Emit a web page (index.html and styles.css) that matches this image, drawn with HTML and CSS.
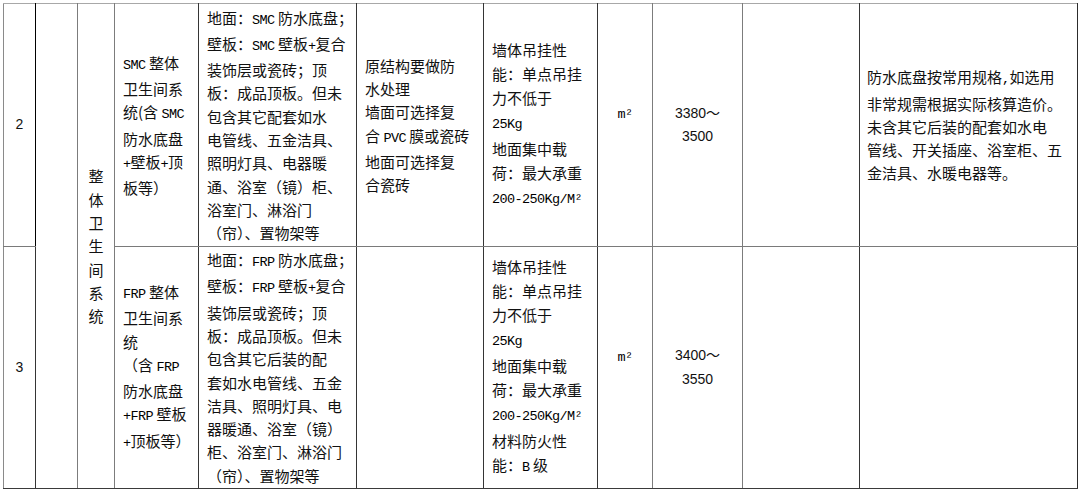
FILE: index.html
```html
<!DOCTYPE html>
<html lang="zh-CN">
<head>
<meta charset="utf-8">
<title>整体卫生间系统</title>
<link rel="stylesheet" href="styles.css">
</head>
<body>
<div class="page">
<table class="sheet">
  <colgroup>
    <col class="c1"><col class="c2"><col class="c3"><col class="c4"><col class="c5"><col class="c6"><col class="c7"><col class="c8"><col class="c9"><col class="c10"><col class="c11">
  </colgroup>
  <tr class="r1">
    <td class="num">2</td>
    <td class="blank g-right" rowspan="2"></td>
    <td class="cat g-right" rowspan="2"><div class="vert">整体卫生间系统</div></td>
    <td class="txt"><span class="lat">SMC</span> 整体<br>卫生间系<br>统(含 <span class="lat">SMC</span><br>防水底盘<br><span class="lat">+</span>壁板<span class="lat">+</span>顶<br>板等）</td>
    <td class="txt">地面：<span class="lat">SMC</span> 防水底盘；<br>壁板：<span class="lat">SMC</span> 壁板<span class="lat">+</span>复合<br>装饰层或瓷砖；顶<br>板：成品顶板。但未<br>包含其它配套如水<br>电管线、五金洁具、<br>照明灯具、电器暖<br>通、浴室（镜）柜、<br>浴室门、淋浴门<br>（帘）、置物架等</td>
    <td class="txt">原结构要做防<br>水处理<br>墙面可选择复<br>合 <span class="lat">PVC</span> 膜或瓷砖<br>地面可选择复<br>合瓷砖</td>
    <td class="txt perf">墙体吊挂性<br>能：单点吊挂<br>力不低于<br><span class="lat">25Kg</span><br>地面集中载<br>荷：最大承重<br><span class="lat">200-250Kg/M²</span></td>
    <td class="unit g-right"><span class="lat">m²</span><br>&nbsp;</td>
    <td class="price g-right">3380～<br>3500</td>
    <td class="txt"></td>
    <td class="txt note">防水底盘按常用规格<span class="lat">,</span>如选用<br>非常规需根据实际核算造价。<br>未含其它后装的配套如水电<br>管线、开关插座、浴室柜、五<br>金洁具、水暖电器等。</td>
  </tr>
  <tr class="r2">
    <td class="num">3</td>
    <td class="txt"><span class="lat">FRP</span> 整体<br>卫生间系<br>统<br>（含 <span class="lat">FRP</span><br>防水底盘<br><span class="lat">+FRP</span> 壁板<br><span class="lat">+</span>顶板等）</td>
    <td class="txt">地面：<span class="lat">FRP</span> 防水底盘；<br>壁板：<span class="lat">FRP</span> 壁板<span class="lat">+</span>复合<br>装饰层或瓷砖；顶<br>板：成品顶板。但未<br>包含其它后装的配<br>套如水电管线、五金<br>洁具、照明灯具、电<br>器暖通、浴室（镜）<br>柜、浴室门、淋浴门<br>（帘）、置物架等</td>
    <td class="txt"></td>
    <td class="txt perf">墙体吊挂性<br>能：单点吊挂<br>力不低于<br><span class="lat">25Kg</span><br>地面集中载<br>荷：最大承重<br><span class="lat">200-250Kg/M²</span><br>材料防火性<br>能：<span class="lat">B</span> 级</td>
    <td class="unit g-right"><span class="lat">m²</span><br>&nbsp;</td>
    <td class="price g-right">3400～<br>3550</td>
    <td class="txt"></td>
    <td class="txt note"></td>
  </tr>
</table>
</div>
</body>
</html>
```

FILE: styles.css
```css
html, body {
  margin: 0;
  padding: 0;
  background: #ffffff;
}

.page {
  padding: 3px 0 0 3px;
}

.sheet {
  border-collapse: collapse;
  table-layout: fixed;
  width: 1074px;
  font-family: "Noto Sans CJK SC", "Liberation Sans", sans-serif;
  font-size: 15px;
  line-height: 23.3px;
  color: #111111;
}

.c1 { width: 32px; }
.c2 { width: 42px; }
.c3 { width: 37px; }
.c4 { width: 84px; }
.c5 { width: 158px; }
.c6 { width: 127px; }
.c7 { width: 114px; }
.c8 { width: 55px; }
.c9 { width: 90px; }
.c10 { width: 117px; }
.c11 { width: 218px; }

.sheet td {
  border: 1px solid #353535;
  padding: 0 6px 0 8px;
  vertical-align: middle;
  white-space: nowrap;
  overflow: hidden;
}

.r1 td {
  height: 242px;
  border-top-color: #a8a8a8;
  border-bottom-color: #7a7a7a;
}

.r2 td {
  height: 241px;
  border-bottom-color: #3a3a3a;
}

.sheet td.num {
  border-left-color: #8a8a8a;
  border-right-color: #000000;
  text-align: center;
  padding: 0;
  font-family: "Liberation Sans", sans-serif;
  font-size: 14px;
}

.sheet td.g-right {
  border-right-color: #7c7c7c;
}

.sheet td.blank,
.sheet td.cat {
  padding: 0;
  border-top-color: #a8a8a8;
  border-bottom-color: #3a3a3a;
}

.sheet td.cat {
  text-align: center;
}

.vert {
  width: 15px;
  margin: 0 auto;
  white-space: normal;
  word-break: break-all;
  line-height: 23.3px;
}

.perf {
  line-height: 24.1px;
}

.sheet td.unit {
  text-align: center;
  padding: 0;
}

.sheet td.price {
  text-align: center;
  padding: 0;
  font-family: "Liberation Sans", "Noto Sans CJK SC", sans-serif;
  font-size: 14px;
}

.sheet td.note {
  padding-left: 7px;
  padding-right: 0;
  border-right-color: #2c2c2c;
}

.lat {
  font-family: "Liberation Mono", monospace;
  font-size: 13.5px;
  letter-spacing: -0.6px;
  color: #000000;
}
```
